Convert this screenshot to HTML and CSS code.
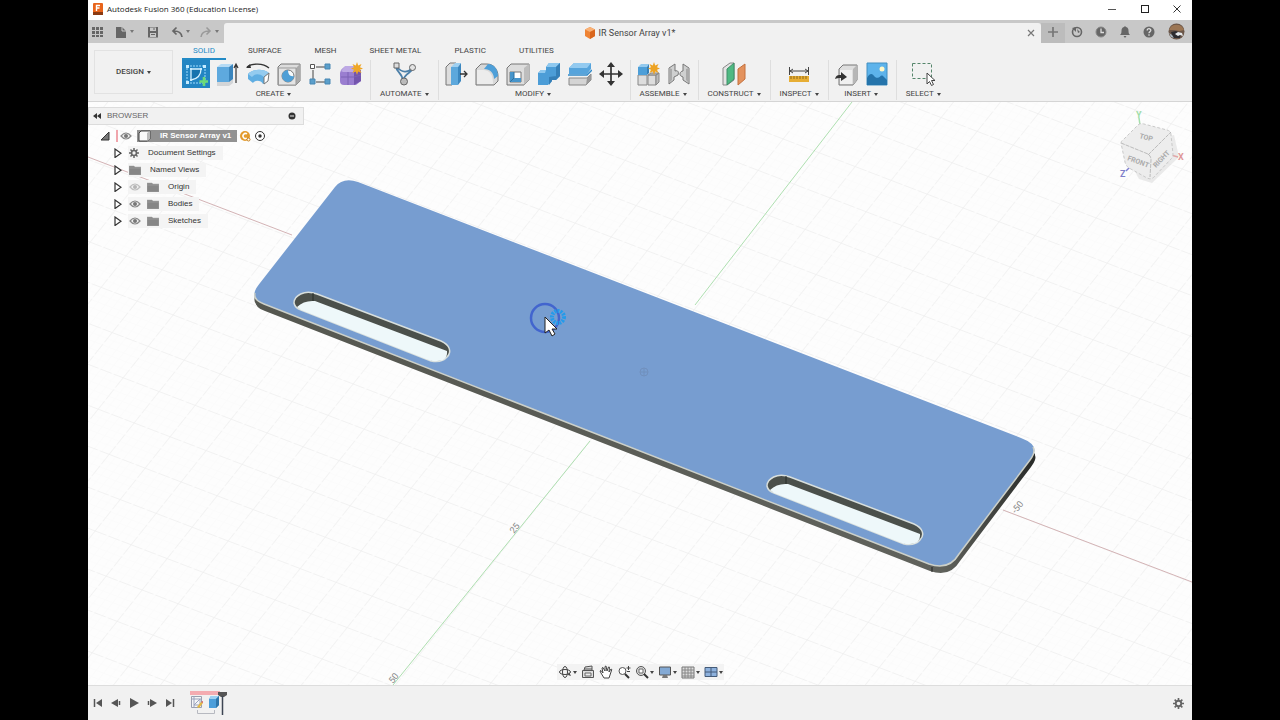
FILE: index.html
```
<!DOCTYPE html>
<html lang="en">
<head>
<meta charset="utf-8">
<title>Autodesk Fusion 360 (Education License)</title>
<link rel="stylesheet" href="styles.css">
</head>
<body>
<div class="app">
  <header class="titlebar">
    <svg class="logo" viewBox="0 0 12 12"><rect x="1" width="10" height="12" rx="1" fill="#e8641b"/><rect x="1" y="9" width="10" height="3" fill="#8a3a12"/><path d="M4.500 8V2.500H8M4.500 5H7.500" stroke="#fff" stroke-width="1.400" fill="none"/></svg>
    <h1 class="title">Autodesk Fusion 360 (Education License)</h1>
    <div class="window-controls">
      <button aria-label="Minimize"><svg viewBox="0 0 12 12"><path d="M2 6.500h8" stroke="#555"/></svg></button>
      <button aria-label="Maximize"><svg viewBox="0 0 12 12"><rect x="2.500" y="2.500" width="7" height="7" fill="none" stroke="#222"/></svg></button>
      <button aria-label="Close"><svg viewBox="0 0 12 12"><path d="M2.500 2.500l7 7m0-7l-7 7" stroke="#333"/></svg></button>
    </div>
  </header>

  <div class="docbar">
    <div class="quick">
      <button class="q-grid" aria-label="Data panel"><svg viewBox="0 0 12 12" fill="#666"><path d="M1 1h3v3H1zM5 1h3v3H5zM9 1h3v3H9zM1 5h3v3H1zM5 5h3v3H5zM9 5h3v3H9zM1 9h3v2H1zM5 9h3v2H5zM9 9h3v2H9z"/></svg></button>
      <button class="q-file" aria-label="File"><svg viewBox="0 0 12 12"><path d="M1 1h6l4 4v7H1z" fill="#666"/><path d="M7 1v4h4" stroke="#c8c8c8" fill="none"/></svg><i class="caret"></i></button>
      <button class="q-save" aria-label="Save"><svg viewBox="0 0 12 12"><path d="M1 1h10v10.500H1z" fill="#666"/><path d="M3 1.500h6v3.500H3zM3 7h6v4H3z" fill="#c8c8c8"/><path d="M4 8.500h4M7 2v2" stroke="#666"/></svg></button>
      <button class="q-undo" aria-label="Undo"><svg viewBox="0 0 12 12"><path d="M11 11C10.500 7 8 5 3 5M5.500 1.500L2 5l3.500 3.500" fill="none" stroke="#666" stroke-width="1.700"/></svg><i class="caret"></i></button>
      <button class="q-redo" aria-label="Redo"><svg viewBox="0 0 12 12"><path d="M1 11C1.500 7 4 5 9 5M6.500 1.500L10 5 6.500 8.500" fill="none" stroke="#999" stroke-width="1.500"/></svg><i class="caret"></i></button>
    </div>
    <div class="doc-tab">
      <svg class="doc-icon" viewBox="0 0 12 12"><path d="M6 0l5 2.500v6.500L6 12 1 9V2.500z" fill="#ef8435"/><path d="M6 0l5 2.500L6 5 1 2.500z" fill="#f9b277"/><path d="M6 5l5-2.500V9L6 12z" fill="#d9661d"/></svg>
      <span class="doc-name">IR Sensor Array v1*</span>
      <button class="tab-close" aria-label="Close tab"><svg viewBox="0 0 12 12"><path d="M3 3l6 6m0-6L3 9" stroke="#777" stroke-width="1.200"/></svg></button>
    </div>
    <div class="account">
      <button class="new-tab" aria-label="New design"><svg viewBox="0 0 12 12"><path d="M6 1v10M1 6h10" stroke="#777" stroke-width="1.700"/></svg></button>
      <button aria-label="Extensions"><svg viewBox="0 0 12 12"><circle cx="6" cy="6" r="4.500" fill="none" stroke="#666" stroke-width="1.600"/><path d="M1 2l4-1v5zM6 3l3 3-2 1z" fill="#666"/></svg></button>
      <button aria-label="Job status"><svg viewBox="0 0 12 12"><circle cx="6" cy="6" r="5" fill="#666" stroke="#888"/><path d="M6 2.500V6.500h3" fill="none" stroke="#ddd" stroke-width="1.300"/></svg></button>
      <button aria-label="Notifications"><svg viewBox="0 0 12 12"><path d="M6 0l1 1c2 .6 2.500 2 2.500 4S10 8 11 9H1c1-1 1.500-2 1.500-4S3 1.600 5 1z" fill="#666"/><path d="M4.500 10h3L6 12z" fill="#666"/></svg></button>
      <button aria-label="Help"><svg viewBox="0 0 12 12"><circle cx="6" cy="6" r="5.500" fill="#666"/><path d="M4.200 4.500c0-2.600 3.800-2.200 3.600 0C7.700 5.700 6 5.600 6 7.300M6 8.300v1.400" fill="none" stroke="#ddd" stroke-width="1.300"/></svg></button>
      <button class="avatar" aria-label="Profile"><svg viewBox="0 0 17 17"><circle cx="8.500" cy="8.500" r="8" fill="#6b5648"/><path d="M1 7a8 8 0 0 1 15 0l-4 1-6-1z" fill="#9c7654"/><path d="M3 9l5-1 5 2-1 5H5z" fill="#2d2c30"/><path d="M7 11l3-2 4 1 1 3-3-1-2 1z" fill="#e6e9ec"/><path d="M1 10l3 2 2 3-3-1z" fill="#a8b5bf"/></svg></button>
    </div>
  </div>

  <div class="ribbon">
    <button class="workspace">DESIGN<i class="caret"></i></button>
    <div class="ribbon-main">
      <nav class="ribbon-tabs">
        <button class="active">SOLID</button><button>SURFACE</button><button>MESH</button><button>SHEET METAL</button><button>PLASTIC</button><button>UTILITIES</button>
      </nav>
      <div class="groups">
        <section class="group wide">
          <div class="tools">
            <button class="selected" aria-label="Create Sketch"><svg viewBox="0 0 24 24"><path d="M3 4h18v17H3z" fill="none" stroke="#9fdcff" stroke-dasharray="2 1"/><path d="M7 18V7h10c0 6-4 10-10 11z" fill="#1673ae" stroke="#d7f2ff" stroke-width="1.300"/><path d="M2 3h3v3H2zM19 3h3v3h-3zM2 19h3v3H2zM6 6h2v2H6zM16 6h2v2h-2zM6 17h2v2H6z" fill="#c5ebff"/><path d="M20 15v9M15.500 19.500H25" stroke="#6ddb78" stroke-width="2.600"/></svg></button>
            <button aria-label="Extrude"><svg viewBox="0 0 24 24"><path d="M2 5l4-3h12l-4 3z" fill="#b5daf4"/><path d="M2 5h12v18H2z" fill="#5ea9de"/><path d="M14 5l4-3v18l-4 3z" fill="#3a85bd"/><path d="M2 20h12l4-3v4l-4 3H2z" fill="#d3d5d7"/><path d="M21 21V3M19 6l2-4 2 4" fill="none" stroke="#333" stroke-width="1.200"/></svg></button>
            <button aria-label="Revolve"><svg viewBox="0 0 24 24"><path d="M1 5c5-4 16-4 22 1" fill="none" stroke="#333" stroke-width="1.300"/><path d="M0 6l4-4 1 4z" fill="#333"/><path d="M2 12c4-5 15-6 21-1l-1 8-5 3c-2-4-8-4-10-1l-5-4z" fill="#60aee2"/><path d="M2 12c4-5 15-6 21-1l-5 4C13 11 8 12 6 15z" fill="#94cbef"/><path d="M18 15l5-4-1 8-4 3z" fill="#fff" stroke="#777"/></svg></button>
            <button aria-label="Hole"><svg viewBox="0 0 24 24"><path d="M1 5l3-3h19v17l-4 4H1z" fill="#ddd" stroke="#777"/><path d="M19 6l4-4v17l-4 4z" fill="#aaa"/><path d="M1.500 6H19v17H1.500z" fill="#e4e4e4" stroke="#999"/><circle cx="11" cy="14" r="6" fill="#f6fafc" stroke="#777"/><path d="M11 8a6 6 0 1 0 6 6c-4 1-6-2-6-6z" fill="#4f9fd6"/></svg></button>
            <button aria-label="Rectangular Pattern"><svg viewBox="0 0 24 24"><path d="M8 5h9M5 8v9M8 20h9" stroke="#444"/><path d="M2.500 2.500h4v4h-4z" fill="#fff" stroke="#555"/><path d="M17 2h5v5h-5zM2 17h5v5H2zM17 17h5v5h-5z" fill="#5b9fcb" stroke="#4887b3"/></svg></button>
            <button aria-label="Create Form"><svg viewBox="0 0 24 24"><path d="M1 11q0-3 3-5l3-2h10l5 5v10l-5 4H5q-4 0-4-4z" fill="#9a7ed0"/><path d="M2 9l4-5h11l-3 6H4z" fill="#bda9e4"/><path d="M15 10l7-2v11l-7 4z" fill="#7455ad"/><path d="M2 15h13l7-2M9 10v13" fill="none" stroke="#7c62b4"/><path d="M18 0l1.200 3.500L22.500 2 21 5.200l3 1.300-3 1.300 1.500 3.200-3.300-1.500L18 13l-1.200-3.500L13.500 11 15 7.800l-3-1.300 3-1.300L13.500 2l3.300 1.500z" fill="#efa727"/></svg></button>
          </div>
          <button class="group-label">CREATE<i class="caret"></i></button>
        </section>
        <section class="group">
          <div class="tools">
            <button aria-label="Automated Modeling"><svg viewBox="0 0 24 24"><path d="M4 5c1 6 6 5 7 14 2-9 8-7 10-13M5 5c5 6 11 6 15 1" fill="none" stroke="#4c7fa8" stroke-width="1.800"/><path d="M2 1h5v5H2z" fill="#ddd" stroke="#666"/><circle cx="20.500" cy="5.500" r="3" fill="#e3e3e3" stroke="#666"/><circle cx="12" cy="19.500" r="3.500" fill="#bbb" stroke="#666"/></svg></button>
          </div>
          <button class="group-label">AUTOMATE<i class="caret"></i></button>
        </section>
        <section class="group wide">
          <div class="tools">
            <button aria-label="Press Pull"><svg viewBox="0 0 24 24"><path d="M2 5l4-4h6v18l-4 4H2z" fill="#ddd" stroke="#777"/><path d="M7 5h7v18H7z" fill="#5da8dc"/><path d="M7 5l4-4h6l-3 4z" fill="#9fd0f1"/><path d="M14 5l3-4v18l-3 4z" fill="#3c87bf"/><path d="M16 12h6m-2-3l3 3-3 3" stroke="#333" fill="none" stroke-width="1.300"/></svg></button>
            <button aria-label="Fillet"><svg viewBox="0 0 24 24"><path d="M1 7l5-5h6c7 0 11 6 11 12v5l-4 4H1z" fill="#d8d8d8" stroke="#777"/><path d="M2 8h6c7 0 10 5 10 14H2z" fill="#ececec"/><path d="M9 7l4-5c6 0 10 5 10 12l-4 3c0-6-4-10-10-10z" fill="#4e9fd8"/></svg></button>
            <button aria-label="Shell"><svg viewBox="0 0 24 24"><path d="M1 6l4-4h18v16l-5 5H1z" fill="#ddd" stroke="#777"/><path d="M18 6l5-4v16l-5 5z" fill="#bdbdbd"/><path d="M4 10h11v10H4z" fill="#fff" stroke="#777"/><path d="M4 10h4v6h7v4H4z" fill="#4795cb"/><path d="M8 10v6l-4 4" fill="none" stroke="#2e709f"/></svg></button>
            <button aria-label="Combine"><svg viewBox="0 0 24 24"><path d="M1 11l3-3h5V5l3-4h11v13l-4 4h-4v1l-4 4H1z" fill="#4c9dd7"/><path d="M9 5l3-4h11l-4 4zM1 11l3-3h5l-1 3z" fill="#8ec8ef"/><path d="M19 5l4-4v13l-4 4zM12 15l7-1v4h-4v1l-3 4z" fill="#357fb7"/></svg></button>
            <button aria-label="Split Body"><svg viewBox="0 0 24 24"><path d="M1 6l5-5h17v6l-4 5H1z" fill="#56a4dc"/><path d="M1 6l5-5h17l-4 5z" fill="#93caf0"/><path d="M0 13h19l5-5" fill="none" stroke="#308aca" stroke-width="1.500"/><path d="M1 16h18l4-4v6l-5 5H1z" fill="#d4d4d4" stroke="#888"/><path d="M19 16l4-4v6l-5 5z" fill="#999"/></svg></button>
            <button aria-label="Move"><svg viewBox="0 0 24 24"><path d="M12 4v16M4 12h16" stroke="#333" stroke-width="1.700"/><path d="M12 0l4 5H8zM12 24l4-5H8zM0 12l5-4v8zM24 12l-5-4v8z" fill="#333"/></svg></button>
          </div>
          <button class="group-label">MODIFY<i class="caret"></i></button>
        </section>
        <section class="group wide">
          <div class="tools">
            <button aria-label="New Component"><svg viewBox="0 0 24 24"><path d="M2 13h9v10H2zM12 13h8v10h-8z" fill="#ddd" stroke="#888"/><path d="M12 13l3-2h8l-3 2zM20 13l3-2v9l-3 3z" fill="#bbb" stroke="#888"/><path d="M2 5h9v8H2z" fill="#4e9fd8"/><path d="M2 5l3-3h8l-2 3z" fill="#94caee"/><path d="M11 5l2-3v9l-2 2z" fill="#357fb7"/><path d="M18 0l1.200 3.500L22.500 2 21 5.200l3 1.300-3 1.300 1.500 3.200-3.300-1.500L18 13l-1.200-3.500L13.500 11 15 7.800l-3-1.300 3-1.300L13.500 2l3.300 1.500z" fill="#eda323"/></svg></button>
            <button aria-label="Joint"><svg viewBox="0 0 24 24"><path d="M2 6l6-4v7c3-1 4 1 3 4l-4 2v3l-5 4zM22 6l-6-4v7c-3 0-4 4-2 5l2 1v3l6 4z" fill="#cfd0d0" stroke="#777"/><path d="M2 6l3 1v11l-3 3zM22 6l-3 1v11l3 3z" fill="#aaa"/></svg></button>
          </div>
          <button class="group-label">ASSEMBLE<i class="caret"></i></button>
        </section>
        <section class="group">
          <div class="tools">
            <button aria-label="Offset Plane"><svg viewBox="0 0 24 24"><path d="M1 6l7-5h4v17l-7 5H1z" fill="#e4e4e4" stroke="#888"/><path d="M5 7l7-6v16l-7 6z" fill="#4fb982" stroke="#3e8f68"/><path d="M16 7l7-5v15l-7 6z" fill="#e3925d" stroke="#c4703d"/></svg></button>
          </div>
          <button class="group-label">CONSTRUCT<i class="caret"></i></button>
        </section>
        <section class="group">
          <div class="tools">
            <button aria-label="Measure"><svg viewBox="0 0 24 24"><path d="M2.500 5v8M21.500 5v8M3 9h18M6 7L3 9l3 2m12-4l3 2-3 2" fill="none" stroke="#444"/><path d="M2 14h20v6H2z" fill="#e7ae34"/><path d="M4 14v3m3-3v3m3-3v3m3-3v3m3-3v3m3-3v3" stroke="#8f691b"/></svg></button>
          </div>
          <button class="group-label">INSPECT<i class="caret"></i></button>
        </section>
        <section class="group wide">
          <div class="tools">
            <button aria-label="Insert Derive"><svg viewBox="0 0 24 24"><path d="M5 7l4-4h14v15l-4 5H5z" fill="#dedede" stroke="#777"/><path d="M6 8h12v14H6z" fill="#f0f0f0"/><path d="M19 7l4-4v15l-4 5z" fill="#b7b7b7"/><path d="M1 17c1-4 3-4 6-4v-3l6 5-6 4v-3c-3 0-4 0-6 1z" fill="#333"/></svg></button>
            <button aria-label="Decal"><svg viewBox="0 0 24 24"><path d="M2 1h20v22H2z" fill="#5db3eb" stroke="#438fc0"/><path d="M2 16c4-7 6-3 8-1 5 3 5-3 8-1l4 4v5H2z" fill="#2574ab"/><circle cx="17" cy="7" r="2.500" fill="#fff8c9"/></svg></button>
          </div>
          <button class="group-label">INSERT<i class="caret"></i></button>
        </section>
        <section class="group">
          <div class="tools">
            <button aria-label="Select"><svg viewBox="0 0 24 24"><path d="M1.500 1.500h19v15h-19z" fill="none" stroke="#54856a" stroke-dasharray="3 2"/><path d="M16 11v11l2.500-2.500 2 4 2-1-2-4H24z" fill="#fff" stroke="#444"/></svg></button>
          </div>
          <button class="group-label">SELECT<i class="caret"></i></button>
        </section>
      </div>
    </div>
  </div>

  <main class="canvas">
    <svg class="scene" viewBox="88 102 1104 583" preserveAspectRatio="xMidYMid slice" aria-label="Model view">
      <defs>
        <pattern id="grid" width="40" height="40" patternUnits="userSpaceOnUse" patternTransform="matrix(.9 .345 -.625 .785 644 372)">
          <path d="M8 0v40M16 0v40M24 0v40M32 0v40M0 8h40M0 16h40M0 24h40M0 32h40" stroke="#fbfbfb"/>
          <path d="M0 0h40M0 0v40" stroke="#eee" stroke-width="1.400" stroke-dasharray="13 2"/>
        </pattern>
        <linearGradient id="side" x1="0" x2="1"><stop offset="0" stop-color="#555750"/><stop offset=".88" stop-color="#60625c"/><stop offset="1" stop-color="#292b29"/></linearGradient>
        <path id="outline" d="M335 187Q343 177 358 182L1021 438Q1037 444 1034 453Q1033 456 1030 460L959 554Q949 571 929 564L264 304Q252 300 255 291Q256 288 260 283Z"/>
        <g id="slot">
          <path d="M294 303C294 296 304 289 317 294L441 341C450 345 452 352 447 357Q442 363 431 361L301 310Q295 308 294 303Z" fill="#4b504b" stroke="#d8dfdd" stroke-width="1.500"/>
          <path d="M297 307Q304 300 315 301L447 351Q448 361 437 361Q433 362 426 359L301 310Z" fill="#eef8fa"/>
          <path d="M313 293v8" stroke="#292c29"/>
        </g>
      </defs>
      <path d="M88 102h1104v583H88z" fill="#fdfdfd"/>
      <path d="M88 102h1104v583H88z" fill="url(#grid)"/>
      <path d="M88 157L292 235M1003 510L1192 582" stroke="#d3b3b5" fill="none"/>
      <path d="M852 102L695 305M590 441L393 685" stroke="#aedfb0" fill="none"/>
      <g class="axis-text">
        <text transform="translate(514 534) rotate(-52)">25</text>
        <text transform="translate(393 684) rotate(-52)">50</text>
        <text transform="translate(1016 514) rotate(-52)">-50</text>
      </g>
      <g fill="url(#side)"><use href="#outline" y="5"/><use href="#outline" x="1" y="7"/></g>
      <path d="M932 567v5" stroke="#222"/>
      <use href="#outline" fill="#779dd0"/>
      <path d="M255 293Q253 300 264 304L929 564Q949 571 959 554L1030 460Q1036 452 1033 447" fill="none" stroke="#ccd0c9" stroke-width="1.500"/>
      <use href="#slot"/>
      <use href="#slot" x="473" y="183"/>
      <circle cx="644" cy="372" r="4" fill="none" stroke="#7190bd"/><path d="M640 372h8M644 368v8" stroke="#7190bd"/>
      <circle cx="545" cy="318" r="14" fill="none" stroke="#4265ce" stroke-width="2.500"/>
      <circle cx="558" cy="317" r="6" fill="none" stroke="#249bea" stroke-width="4" stroke-dasharray="2 1"/>
      <path d="M545 317v16l4-3 3 6 3-2-3-5h5z" fill="#fff" stroke="#222"/>
      <g class="viewcube">
        <path d="M1124 151l15 28 13 4 27-26-5-22z" fill="#d8d8d8" opacity=".5"/>
        <path d="M1139 118l1 7" stroke="#a4dfaa" stroke-width="1.500"/><path d="M1171 155l7 2" stroke="#e2a6a6" stroke-width="1.500"/><path d="M1131 166l-5 5" stroke="#7e7ed0" stroke-width="1.500"/>
        <path d="M1121 143q0-2 3-4l14-14q2-2 6-1l23 6q4 1 4 5l2 19q0 3-2 5l-17 18q-3 3-7 1l-18-10q-3-2-4-6z" fill="#ededed"/>
        <path d="M1121 143l27 11q3 2 3 6l-1 17M1148 155l23-23" fill="none" stroke="#bbb" stroke-dasharray="4 1"/>
        <path d="M1121 143q0-2 3-4l14-14q2-2 6-1l23 6q4 1 4 5l2 19q0 3-2 5l-17 18q-3 3-7 1l-18-10q-3-2-4-6z" fill="none" stroke="#c9c9c9" stroke-dasharray="3 2"/>
        <text transform="translate(1139 138) rotate(15)">TOP</text><text transform="translate(1127 160) rotate(20)">FRONT</text><text transform="translate(1156 168) rotate(-46)">RIGHT</text>
        <text class="ax-y" x="1136" y="118">Y</text><text class="ax-x" x="1178" y="160">X</text><text class="ax-z" x="1120" y="177">Z</text>
      </g>
    </svg>

    <aside class="browser">
      <header class="browser-head"><svg class="rewind" viewBox="0 0 8 6"><path d="M4 0v6L0 3zM8 0v6L4 3z" fill="#333"/></svg><h2>BROWSER</h2><button aria-label="Collapse"><svg viewBox="0 0 8 8"><circle cx="4" cy="4" r="3.500" fill="#333"/><path d="M2 4h4" stroke="#eee"/></svg></button></header>
      <ul class="tree">
        <li class="root"><svg class="i-open" viewBox="0 0 10 10"><path d="M9 1v8H1z" fill="#777" stroke="#333"/></svg><i class="edit-mark"></i><svg class="i-eye" viewBox="0 0 12 10"><use href="#eye"/></svg><span class="chosen"><svg class="i-body" viewBox="0 0 14 12"><path d="M2 3l2-2h9v8l-3 2H2z" fill="#fafafa" stroke="#444"/><path d="M10 3l3-2v8l-3 2z" fill="#bbb"/></svg>IR Sensor Array v1</span><svg class="i-badge" viewBox="0 0 12 12"><circle cx="6" cy="6" r="5" fill="#e39b2d"/><path d="M8 4a2.500 2.500 0 1 0 0 4" fill="none" stroke="#fff" stroke-width="1.500"/><circle cx="9.500" cy="9.500" r="1.500" fill="#fff" stroke="#c77d15"/></svg><svg class="i-radio" viewBox="0 0 12 12"><circle cx="6" cy="6" r="4.500" fill="#fff" stroke="#333"/><circle cx="6" cy="6" r="1.700" fill="#333"/></svg></li>
        <li><svg class="i-arrow" viewBox="0 0 8 10"><use href="#arrow"/></svg><span class="item"><svg class="i-gear" viewBox="0 0 12 12"><use href="#gear"/></svg>Document Settings</span></li>
        <li><svg class="i-arrow" viewBox="0 0 8 10"><use href="#arrow"/></svg><span class="item"><svg class="i-folder" viewBox="0 0 12 10"><use href="#folder"/></svg>Named Views</span></li>
        <li><svg class="i-arrow" viewBox="0 0 8 10"><use href="#arrow"/></svg><span class="item"><svg class="i-eye off" viewBox="0 0 12 10"><use href="#eye"/></svg><svg class="i-folder" viewBox="0 0 12 10"><use href="#folder"/></svg>Origin</span></li>
        <li><svg class="i-arrow" viewBox="0 0 8 10"><use href="#arrow"/></svg><span class="item"><svg class="i-eye" viewBox="0 0 12 10"><use href="#eye"/></svg><svg class="i-folder" viewBox="0 0 12 10"><use href="#folder"/></svg>Bodies</span></li>
        <li><svg class="i-arrow" viewBox="0 0 8 10"><use href="#arrow"/></svg><span class="item"><svg class="i-eye" viewBox="0 0 12 10"><use href="#eye"/></svg><svg class="i-folder" viewBox="0 0 12 10"><use href="#folder"/></svg>Sketches</span></li>
      </ul>
    </aside>

    <div class="navbar">
      <button aria-label="Orbit"><svg viewBox="0 0 14 14"><ellipse cx="7" cy="7" rx="5.500" ry="2.500" fill="none" stroke="#444"/><ellipse cx="7" cy="7" rx="2.500" ry="5.500" fill="none" stroke="#444"/><path d="M10 10l3 1-2-4z" fill="#444"/></svg><i class="caret"></i></button>
      <button aria-label="Look At"><svg viewBox="0 0 14 14"><path d="M1.500 5.500h11v7h-11zM3 5l1-3 7-1v4" fill="#ddd" stroke="#555"/><path d="M4 8h6v3H4z" fill="#eee" stroke="#666"/><path d="M3 4h8" stroke="#555"/></svg></button>
      <button aria-label="Pan"><svg viewBox="0 0 14 14"><path d="M5 13L2 8 1 6l1-.5L4 8 3 3l1-.5L6 6V1.500L7 1l1 5 1.500-4 1 .2L10 7l2-3 .8.500L11 10l-1 3z" fill="#fff" stroke="#444"/></svg></button>
      <button aria-label="Zoom"><svg viewBox="0 0 14 14"><circle cx="5.500" cy="6" r="3.500" fill="#fff" stroke="#555"/><path d="M8 9l4 4" stroke="#333" stroke-width="2"/><path d="M11.500 1v4M9.500 3h4M10 6.500h3" stroke="#444"/></svg></button>
      <button aria-label="Fit"><svg viewBox="0 0 14 14"><circle cx="6" cy="6" r="4.500" fill="#ddd" stroke="#555"/><path d="M4 4h4v4H4z" fill="#fff" stroke="#666"/><path d="M9 9l4 4" stroke="#333" stroke-width="2"/></svg><i class="caret"></i></button>
      <button aria-label="Display Settings"><svg viewBox="0 0 14 14"><path d="M1.500 2h11v8h-11z" fill="#83a9d4" stroke="#555"/><path d="M5 10h4l1 3H4z" fill="#777"/></svg><i class="caret"></i></button>
      <button aria-label="Grid and Snaps"><svg viewBox="0 0 14 14"><path d="M1 2h12v11H1z" fill="#ddd" stroke="#777"/><path d="M4 2v11M7 2v11M10 2v11M1 5h12M1 8h12M1 11h12" stroke="#888"/></svg><i class="caret"></i></button>
      <button aria-label="Viewports"><svg viewBox="0 0 14 14"><path d="M1 2.500h12v9H1z" fill="#8db1dd" stroke="#445b78"/><path d="M7 2v10M1 7h12" stroke="#445b78"/></svg><i class="caret"></i></button>
    </div>
  </main>

  <footer class="timeline">
    <div class="playback">
      <button aria-label="To start"><svg viewBox="0 0 12 12"><path d="M10 2v8L4 6z" fill="#555"/><path d="M2.500 2v8" stroke="#555" stroke-width="1.500"/></svg></button>
      <button aria-label="Step back"><svg viewBox="0 0 12 12"><path d="M8 2v8L1 6z" fill="#555"/><path d="M9.500 4v4" stroke="#555" stroke-width="1.500"/></svg></button>
      <button aria-label="Play"><svg viewBox="0 0 12 12"><path d="M2 1l9 5-9 5z" fill="#555"/></svg></button>
      <button aria-label="Step forward"><svg viewBox="0 0 12 12"><path d="M4 2v8l7-4z" fill="#555"/><path d="M2.500 4v4" stroke="#555" stroke-width="1.500"/></svg></button>
      <button aria-label="To end"><svg viewBox="0 0 12 12"><path d="M2 2v8l6-4z" fill="#555"/><path d="M9.500 2v8" stroke="#555" stroke-width="1.500"/></svg></button>
    </div>
    <svg class="features" viewBox="0 0 38 26" role="img" aria-label="Sketch and extrude features"><path d="M0 1h30v4H0z" fill="#f4acb1"/><path d="M1.500 6.500h10v11h-10z" fill="#f6f6f6" stroke="#9a9fae"/><path d="M4 6v12M1 9h11M4 15l6-6v6z" stroke="#9aa3bd" fill="none"/><path d="M7 17l4-5 2 1-4 5z" fill="#e4b843"/><path d="M11 12l2-1v2z" fill="#d45454"/><path d="M19 9l2-3h8v9l-3 3h-7z" fill="#4c9eda"/><path d="M19 9l2-3h8l-3 3z" fill="#9dd0f2"/><path d="M26 9l3-3v9l-3 3z" fill="#2f75a9"/><path d="M7.500 20v3.500h17V20" fill="none" stroke="#b7b9c0"/><path d="M28 2h9v3l-3 2h-3l-3-2z" fill="#555"/><path d="M32.500 6v19" stroke="#3d4553" stroke-width="1.500"/></svg>
    <button class="settings" aria-label="Timeline settings"><svg viewBox="0 0 12 12"><use href="#gear"/></svg></button>
  </footer>
</div>

<svg class="symbols" aria-hidden="true">
  <defs>
    <path id="arrow" d="M1 1v8.500l6-4.250z" fill="#fff" stroke="#333" stroke-width="1.200"/>
    <path id="folder" d="M0 1h5l1 1h6v8H0zM0 3h12" fill="#868686" stroke="#aaa" stroke-width=".5"/>
    <g id="eye"><path d="M1 5q5-6 10 0-5 6-10 0z" fill="#eee" stroke="#888" stroke-width="1.200"/><circle cx="6" cy="5" r="2" fill="#777"/></g>
    <g id="gear"><circle cx="6" cy="6" r="3" fill="none" stroke="#666" stroke-width="2"/><path d="M6 0v2.500M6 9.500V12M0 6h2.500M9.500 6H12M1.800 1.800l1.700 1.700M8.500 8.500l1.700 1.700M10.200 1.800L8.500 3.500M3.500 8.500l-1.700 1.700" stroke="#666" stroke-width="1.800"/></g>
  </defs>
</svg>
</body>
</html>
```
FILE: styles.css
```
* { box-sizing: border-box; }
body {
  margin: 0;
  padding: 0 88px;
  background: #000;
  color: #444;
  font: 8px/12px Roboto, "Liberation Sans", sans-serif;
}
button {
  display: flex;
  align-items: center;
  justify-content: center;
  padding: 0;
  border: 0;
  background: none;
  color: inherit;
  font: inherit;
}
svg { display: block; flex: none; }
h1, h2 { margin: 0; font: inherit; }
.symbols { position: absolute; width: 0; height: 0; }
.caret {
  border: 2px solid transparent;
  border-top: 3px solid #444;
  border-bottom: 0;
  margin-left: 3px;
}
.app { display: flex; flex-direction: column; min-height: 100vh; background: #f1f1f1; }

.titlebar { display: flex; align-items: center; height: 20px; padding: 0 4px 2px; background: #fff; }
.logo { width: 12px; height: 12px; margin-right: 3px; }
.title { color: #222; font: 8px/12px "Open Sans", sans-serif; }
.window-controls { display: flex; margin-left: auto; }
.window-controls button { width: 33px; }
.window-controls svg { width: 12px; height: 12px; }
.window-controls button:last-child { width: 22px; justify-content: flex-end; padding-right: 5px; margin-left: 5px; }

.docbar { display: flex; height: 23px; background: #c8c8c8; }
.quick { display: flex; align-items: center; width: 136px; padding-left: 3px; }
.quick button { justify-content: flex-start; }
.quick svg { width: 12px; height: 12px; }
.quick .caret { border-top-color: #777; }
.q-grid { width: 24px; }
.q-file { width: 32px; }
.q-save { width: 24px; }
.q-undo { width: 29px; }
.doc-tab {
  display: flex;
  flex: 1;
  align-items: center;
  margin-top: 3px;
  padding: 0 4px 0 10px;
  border-radius: 3px 3px 0 0;
  background: #f1f1f1;
}
.doc-icon { width: 12px; height: 12px; margin-left: auto; }
.doc-name { margin-left: 3px; font-size: 9px; }
.tab-close { margin-left: auto; }
.tab-close svg { width: 12px; height: 12px; }
.account { display: flex; align-items: stretch; }
.account button { width: 24px; }
.account svg { width: 12px; height: 12px; }
.account .new-tab { background: #bcbcbc; margin-top: 3px; padding-bottom: 2px; }
.account .avatar { width: 31px; }
.account .avatar svg { width: 17px; height: 17px; }

.ribbon { display: flex; height: 59px; padding-left: 6px; border-bottom: 1px solid #d5d5d5; }
.workspace {
  width: 79px;
  height: 44px;
  margin-top: 7px;
  border: 1px solid #e2e2e2;
  font-weight: 500;
}
.ribbon-main { flex: 1; padding-left: 6px; }
.ribbon-tabs { display: flex; gap: 11px; height: 17px; padding-left: 3px; }
.ribbon-tabs button { padding: 0 11px; border-bottom: 2px solid transparent; }
.ribbon-tabs .active { border-color: #238bc6; color: #238bc6; }
.groups { display: flex; }
.group { padding: 0 9px; border-right: 1px solid #dedede; }
.group.wide { padding: 0 5px 0 3px; }
.group:last-child { border-right: 0; }
.tools { display: flex; justify-content: center; gap: 3px; }
.tools button { width: 28px; height: 28px; }
.tools svg { width: 24px; height: 24px; }
.tools .selected { background: #2385c3; }
.group-label { width: 100%; height: 12px; }

.canvas {
  display: flex;
  flex: 1;
  flex-direction: column;
  align-items: flex-start;
  justify-content: space-between;
  position: relative;
  padding: 5px 0;
  overflow: hidden;
}
.scene { position: absolute; inset: 0; width: 100%; height: 100%; }
.axis-text { fill: #888; font-size: 9px; }
.viewcube { fill: #aaa; font-size: 7px; font-weight: bold; }
.ax-x, .ax-y, .ax-z { font-size: 9px; }
.ax-y { fill: #9edca7; }
.ax-x { fill: #df9898; }
.ax-z { fill: #7f7fc9; }

.browser { position: relative; width: 216px; color: #333; font-family: "Liberation Sans", sans-serif; }
.browser-head {
  display: flex;
  align-items: center;
  height: 18px;
  padding: 0 7px 0 4px;
  border: 1px solid #dcdcdc;
  background: #f1f1f1;
  color: #666;
}
.browser-head h2 { flex: 1; margin-left: 6px; }
.rewind { width: 8px; height: 6px; }
.browser-head button svg { width: 8px; height: 8px; }
.tree { margin: 2px 0 0; padding: 0; list-style: none; }
.tree li { display: flex; align-items: center; height: 17px; padding-left: 26px; }
.tree .root { padding-left: 12px; }
.item { display: flex; align-items: center; height: 14px; margin-left: 6px; padding: 0 7px 0 1px; background: #f4f4f4; }
.i-open { width: 10px; height: 10px; }
.i-arrow { width: 8px; height: 10px; }
.edit-mark { width: 2px; height: 12px; margin: 0 2px 0 6px; background: #f0a5ac; }
.i-eye { width: 12px; height: 10px; margin-right: 6px; }
.root .i-eye { margin-right: 5px; }
.off { opacity: .5; }
.i-folder { width: 12px; height: 10px; margin-right: 9px; }
.i-gear { width: 10px; height: 10px; margin: 0 9px 0 0; }
.chosen { display: flex; align-items: center; height: 12px; padding-right: 6px; background: #929292; color: #fff; font-weight: bold; }
.i-body { width: 14px; height: 12px; margin-right: 9px; }
.i-badge { width: 12px; height: 12px; margin-left: 2px; }
.i-radio { width: 12px; height: 12px; margin-left: 3px; }

.navbar {
  display: flex;
  align-items: center;
  align-self: center;
  gap: 4px;
  position: relative;
  height: 16px;
  padding: 0 1px;
  background: #f3f3f3;
}
.navbar svg { width: 14px; height: 14px; }
.navbar .caret { margin-left: 1px; }

.timeline { display: flex; align-items: center; height: 35px; padding: 0 8px 0 1px; border-top: 1px solid #ddd; }
.playback { display: flex; }
.playback button { width: 18px; }
.playback svg { width: 12px; height: 12px; }
.features { width: 38px; height: 26px; margin-left: 11px; }
.settings { margin-left: auto; }
.settings svg { width: 11px; height: 11px; }
```
